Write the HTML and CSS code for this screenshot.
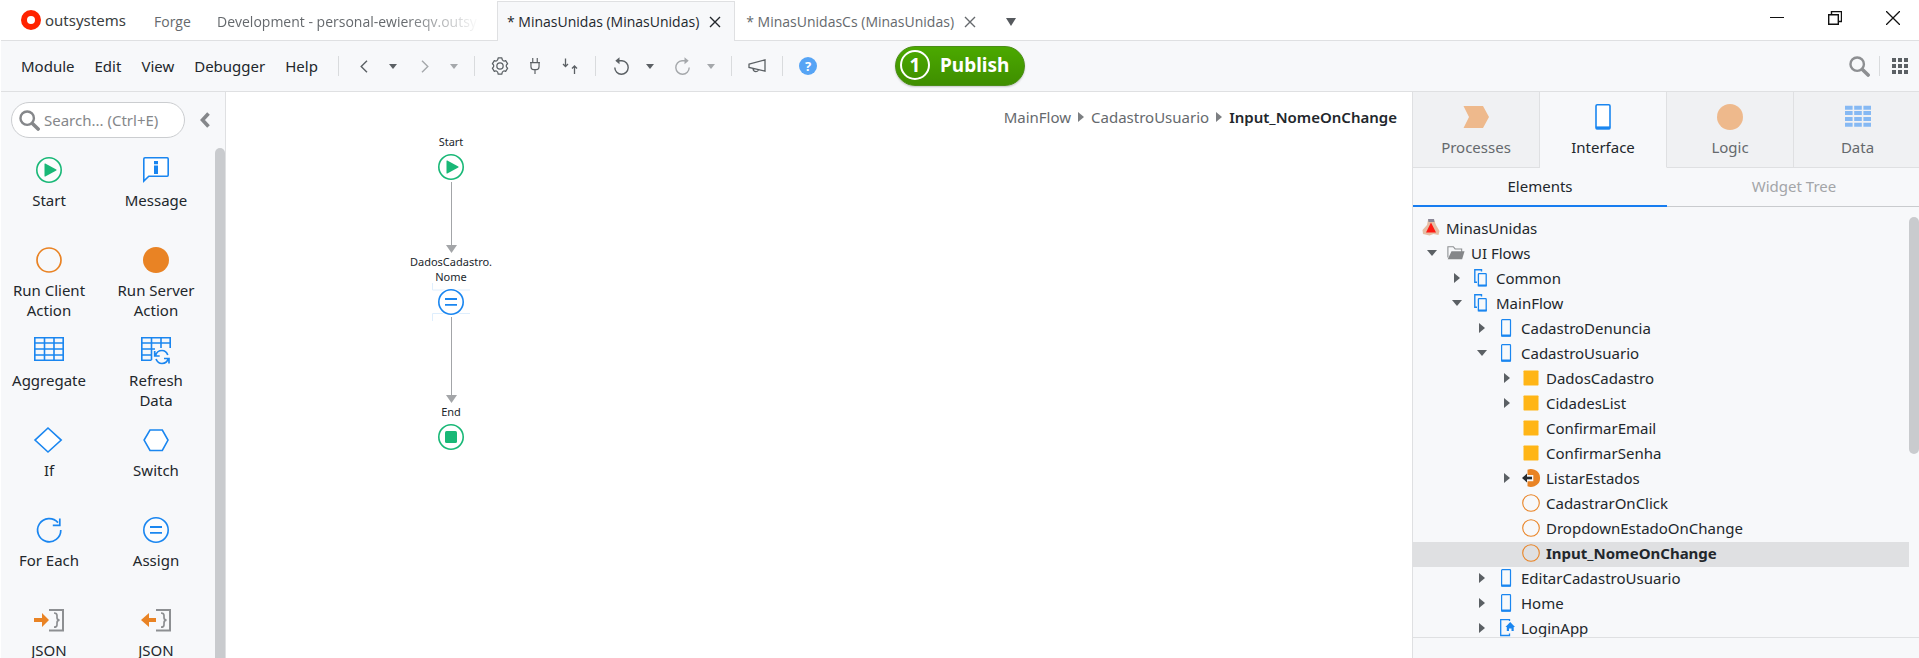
FILE: index.html
```html
<!DOCTYPE html>
<html lang="en">
<head>
<meta charset="utf-8">
<title>MinasUnidas</title>
<link rel="stylesheet" href="styles.css">
</head>
<body>
<svg class="defs" aria-hidden="true">
  <symbol id="down" viewBox="0 0 10 6"><path d="M0 0h10L5 6z" fill="currentColor"/></symbol>
  <symbol id="right" viewBox="0 0 6 10"><path d="M0 0v10l6-5z" fill="currentColor"/></symbol>
  <symbol id="x" viewBox="0 0 12 12"><path d="M1 1l10 10M11 1L1 11" stroke="currentColor" stroke-width="1.4" fill="none"/></symbol>
  <symbol id="search" viewBox="0 0 20 20"><circle cx="7.800" cy="7.800" r="6.400" fill="none" stroke="currentColor" stroke-width="2.300"/><path d="M13 13l5.200 5.200" stroke="currentColor" stroke-width="3.400" stroke-linecap="round"/></symbol>
  <symbol id="start" viewBox="0 0 26 26"><circle cx="13" cy="13" r="12.200" fill="#fff" fill-opacity=".6" stroke="#19b877" stroke-width="1.600"/><path d="M8.500 7v12q0 .8.800.4l11-5.800q.7-.5 0-1L9.300 6.600Q8.500 6.200 8.500 7z" fill="#19b877"/></symbol>
  <symbol id="assign" viewBox="0 0 26 26"><circle cx="13" cy="13" r="12.200" fill="#fff" fill-opacity=".6" stroke="#1a86f0" stroke-width="1.600"/><path d="M7 10h12M7 15.800h12" stroke="#1a86f0" stroke-width="1.800"/></symbol>
  <symbol id="end" viewBox="0 0 26 26"><circle cx="13" cy="13" r="12.200" fill="#fff" stroke="#19b877" stroke-width="1.600"/><rect x="7" y="7" width="12" height="12" rx="1.500" fill="#19b877"/></symbol>
  <symbol id="ring" viewBox="0 0 26 26"><circle cx="13" cy="13" r="12" fill="none" stroke="#e98324" stroke-width="1.700"/></symbol>
  <symbol id="flow" viewBox="0 0 18 18"><path d="M9.500 2.500V.8H2.800v12.400H5" fill="none" stroke="#1a86f0" stroke-width="1.400"/><rect x="6.400" y="4.600" width="7.800" height="12" rx=".6" fill="#f7f9fb" stroke="#1a86f0" stroke-width="1.300"/><path d="M5.800 16.500h9" stroke="#1a86f0" stroke-width="2"/></symbol>
  <symbol id="screen" viewBox="0 0 18 18"><rect x="4.600" y=".6" width="8.900" height="16.500" rx=".7" fill="#f7f9fb" stroke="#1a86f0" stroke-width="1.200"/><path d="M4.300 16.500h9.500" stroke="#1a86f0" stroke-width="2"/></symbol>
  <symbol id="var" viewBox="0 0 18 18"><rect x="1.500" y="1.500" width="15" height="15" rx=".7" fill="#ffb516"/></symbol>
  <symbol id="action" viewBox="0 0 18 18"><circle cx="9" cy="9" r="8.300" fill="none" stroke="#e98324" stroke-width="1.100"/></symbol>
</svg>

<header class="titlebar">
  <a class="brand" href="#"><svg width="20" height="20" viewBox="0 0 20 20"><circle cx="10" cy="10" r="7" fill="none" stroke="#ff2300" stroke-width="6"/></svg>outsystems</a>
  <nav class="tabs" aria-label="Open documents">
    <a class="tab forge" href="#">Forge</a>
    <a class="tab env" href="#">Development - personal-ewiereqv.outsy</a>
    <div class="tab active"><a href="#">* MinasUnidas (MinasUnidas)</a><button aria-label="Close MinasUnidas"><svg width="12" height="12"><use href="#x"/></svg></button></div>
    <div class="tab"><a href="#">* MinasUnidasCs (MinasUnidas)</a><button aria-label="Close MinasUnidasCs"><svg width="12" height="12"><use href="#x"/></svg></button></div>
    <button class="more" aria-label="More tabs"><svg width="10" height="8" viewBox="0 0 10 8"><path d="M0 0h10L5 8z" fill="currentColor"/></svg></button>
  </nav>
  <div class="window">
    <button aria-label="Minimize"><svg width="14" height="14" viewBox="0 0 14 14"><path d="M0 6.500h14" stroke="currentColor"/></svg></button>
    <button aria-label="Restore"><svg width="14" height="14" viewBox="0 0 14 14"><path d="M3.500 3.500v-3h10v10h-3M.7 3.700h9.600v9.600H.7z" fill="none" stroke="currentColor" stroke-width="1.400"/></svg></button>
    <button aria-label="Close"><svg width="14" height="14" viewBox="0 0 14 14"><path d="M0 0l14 14M14 0L0 14" stroke="currentColor" stroke-width="1.300"/></svg></button>
  </div>
</header>

<div class="toolbar">
  <nav class="menu"><button>Module</button><button>Edit</button><button>View</button><button>Debugger</button><button>Help</button></nav>
  <div class="tools">
    <span class="sep"></span>
    <button class="step" aria-label="Back"><svg width="8" height="13" viewBox="0 0 8 13"><path d="M7 .7L1.200 6.500 7 12.300" fill="none" stroke="currentColor" stroke-width="1.400"/></svg></button>
    <button class="drop" aria-label="Back history"><svg width="8" height="5"><use href="#down"/></svg></button>
    <button class="step off" aria-label="Forward"><svg width="8" height="13" viewBox="0 0 8 13"><path d="M1 .7l5.800 5.800L1 12.300" fill="none" stroke="currentColor" stroke-width="1.400"/></svg></button>
    <button class="drop off" aria-label="Forward history"><svg width="8" height="5"><use href="#down"/></svg></button>
    <span class="sep"></span>
    <button class="tool" aria-label="Settings"><svg width="18" height="18" viewBox="0 0 20 20" fill="none" stroke="currentColor" stroke-width="1.400" stroke-linejoin="round"><path d="M8 1h4q.3 2.600 1.500 3.200 1 .6 2.800-.1l2.200 3.500q-1.600 1.200-1.600 2.400t1.600 2.400l-2.200 3.500q-1.800-.7-2.800-.1Q12.300 16.400 12 19H8q-.3-2.600-1.500-3.200-1-.6-2.800.1l-2.200-3.500q1.600-1.200 1.600-2.400T1.500 7.600l2.200-3.500q1.800.7 2.800.1Q7.700 3.600 8 1z"/><circle cx="10" cy="10" r="3.500"/></svg></button>
    <button class="tool" aria-label="Dependencies"><svg width="18" height="20" viewBox="0 0 20 20" fill="none" stroke="currentColor" stroke-width="1.300"><path d="M7.500 1v5M12.500 1v5M4.500 6.200h11M5.500 6.500v4q0 3.500 3 3.500h3q3 0 3-3.500v-4M10 14v5"/></svg></button>
    <button class="tool" aria-label="Merge"><svg width="18" height="18" viewBox="0 0 18 18" fill="none" stroke="currentColor" stroke-width="1.300"><path d="M4.500 1.500v8M2 7l2.500 2.500L7 7M13.500 17V9M11 11.500L13.500 9l2.500 2.500"/></svg></button>
    <span class="sep"></span>
    <button class="hist" aria-label="Undo"><svg width="17" height="18" viewBox="0 0 17 18"><path d="M5 3.800h4A6.700 6.700 0 1 1 1.800 10.500" fill="none" stroke="currentColor" stroke-width="1.400"/><path d="M6.500.3v7L2.300 3.800z" fill="currentColor"/></svg></button>
    <button class="drop" aria-label="Undo history"><svg width="8" height="5"><use href="#down"/></svg></button>
    <button class="hist off" aria-label="Redo"><svg width="17" height="18" viewBox="0 0 17 18"><path d="M12 3.800H8A6.700 6.700 0 1 0 15.200 10.500" fill="none" stroke="currentColor" stroke-width="1.400"/><path d="M10.500.3v7l4.200-3.500z" fill="currentColor"/></svg></button>
    <button class="drop off" aria-label="Redo history"><svg width="8" height="5"><use href="#down"/></svg></button>
    <span class="sep"></span>
    <button class="single" aria-label="Feedback"><svg width="18" height="14" viewBox="0 0 18 14"><path d="M1 5.200L17 .9v11.200L1 8.500zM5 9.500q.3 3.200 3 3.200 2 0 2.500-2" fill="none" stroke="currentColor" stroke-width="1.300"/></svg></button>
    <span class="sep"></span>
    <button class="single help" aria-label="Help">?</button>
  </div>
  <button class="publish"><span class="count">1</span>Publish</button>
  <div class="right-tools">
    <button aria-label="Search"><svg width="21" height="21"><use href="#search"/></svg></button>
    <span class="sep"></span>
    <button aria-label="Apps"><svg width="16" height="16" viewBox="0 0 16 16" fill="#5b6064"><path d="M0 0h4v4H0zM6 0h4v4H6zM12 0h4v4h-4zM0 6h4v4H0zM6 6h4v4H6zM12 6h4v4h-4zM0 12h4v4H0zM6 12h4v4H6zM12 12h4v4h-4z"/></svg></button>
  </div>
</div>

<div class="workspace">
  <aside class="palette">
    <div class="palette-head">
      <label class="search"><svg width="21" height="21"><use href="#search"/></svg><input type="text" placeholder="Search... (Ctrl+E)" aria-label="Search"></label>
      <button class="collapse" aria-label="Collapse"><svg width="10" height="16" viewBox="0 0 10 16"><path d="M8.500 1.500L2.500 8l6 6.500" fill="none" stroke="currentColor" stroke-width="3.600"/></svg></button>
    </div>
    <div class="palette-body">
      <div class="items">
        <button><svg width="30" height="26"><use href="#start"/></svg><span>Start</span></button>
        <button><svg width="30" height="26" viewBox="0 0 30 26"><path d="M2.800 24V2q0-1.200 1.200-1.200h22.200q1 0 1 1.200v16q0 1.200-1 1.200H7.800z" fill="#fff" stroke="#1a86f0" stroke-width="1.600"/><path d="M13 4h4v3.200h-4zM13 8.500h4V17h-4z" fill="#1a86f0"/></svg><span>Message</span></button>
        <button><svg width="30" height="26"><use href="#ring"/></svg><span>Run Client Action</span></button>
        <button><svg width="30" height="26" viewBox="0 0 30 26"><circle cx="15" cy="13" r="13" fill="#e98324"/></svg><span>Run Server Action</span></button>
        <button><svg width="30" height="26" viewBox="0 0 30 26"><path d="M.8.800h28.400v22.400H.8zM.8 6h28.400M.8 12h28.400M.8 18h28.400M10.500 1v22M20 1v22" fill="none" stroke="#1a86f0" stroke-width="1.600"/></svg><span>Aggregate</span></button>
        <button><svg width="30" height="26" viewBox="0 0 30 26"><path d="M10.500 23.200H.8V.8h28.400V11M.8 6h28.400M.8 12H14M.8 18h9.700M10.500 1v22M20 1v10" fill="none" stroke="#1a86f0" stroke-width="1.600"/><path d="M14.500 18.500q1.500-5 6.500-5 4 0 5.800 4.500M27.300 21.500q-1.500 5-6.300 5-4.200 0-6-4.500M13.700 14v5h5M28 26.500v-5h-5" fill="none" stroke="#1a86f0" stroke-width="1.700"/></svg><span>Refresh Data</span></button>
        <button><svg width="30" height="26" viewBox="0 0 30 26"><path d="M14 1l13.200 12.100L14 25 1 13.100z" fill="#fff" stroke="#1a86f0" stroke-width="1.600"/></svg><span>If</span></button>
        <button><svg width="30" height="26" viewBox="0 0 30 26"><path d="M9 3h12.300L27 13.100l-5.700 10.400H9L3.100 13.100z" fill="#fff" stroke="#1a86f0" stroke-width="1.600"/></svg><span>Switch</span></button>
        <button><svg width="30" height="26" viewBox="0 0 30 26"><path d="M26.800 13A11.600 11.600 0 1 1 24 5.600M25.800 1.600v6.700h-7" fill="none" stroke="#1a86f0" stroke-width="1.700"/></svg><span>For Each</span></button>
        <button><svg width="30" height="26"><use href="#assign"/></svg><span>Assign</span></button>
        <button><svg width="30" height="26" viewBox="0 0 30 26"><path d="M0 11h8V6l7 7-7 7v-5H0z" fill="#e98324"/><path d="M15 3h14v20.500H15" fill="none" stroke="#8d8f92" stroke-width="2"/><path d="M20 6q3 0 3 2.500v2q0 2.500 2.500 2.700-2.500.2-2.500 2.700v1.800q0 2.500-3 2.500" fill="none" stroke="#8d8f92" stroke-width="1.700"/></svg><span>JSON</span></button>
        <button><svg width="30" height="26" viewBox="0 0 30 26"><path d="M15 11H8V6l-8 7 8 7v-5h7z" fill="#e98324"/><path d="M15 3h14v20.500H15" fill="none" stroke="#8d8f92" stroke-width="2"/><path d="M20 6q3 0 3 2.500v2q0 2.500 2.500 2.700-2.500.2-2.500 2.700v1.800q0 2.500-3 2.500" fill="none" stroke="#8d8f92" stroke-width="1.700"/></svg><span>JSON</span></button>
      </div>
      <div class="thumb"></div>
    </div>
  </aside>

  <main class="canvas">
    <nav class="crumbs" aria-label="Breadcrumb"><a href="#">MainFlow</a><svg width="6" height="10"><use href="#right"/></svg><a href="#">CadastroUsuario</a><svg width="6" height="10"><use href="#right"/></svg><strong>Input_NomeOnChange</strong></nav>
    <div class="flow">
      <div class="node"><span>Start</span><svg width="26" height="26"><use href="#start"/></svg></div>
      <svg width="12" height="72" viewBox="0 0 12 72"><path d="M6.500 0v64" stroke="#a3a5a8"/><path d="M1 63h11l-5.500 8z" fill="#a3a5a8"/></svg>
      <div class="node"><span>DadosCadastro.<br>Nome</span><svg width="38" height="38" viewBox="-6 -6 38 38" class="picked"><path d="M-5.500-6v7h38M-5.500 32v-7.500h38" fill="none" stroke="#deeefd"/><circle cx="13" cy="13" r="14" fill="#fff"/><use href="#assign" width="26" height="26"/></svg></div>
      <svg width="12" height="87" viewBox="0 0 12 87"><path d="M6.500 0v79" stroke="#a3a5a8"/><path d="M1 78h11l-5.500 8z" fill="#a3a5a8"/></svg>
      <div class="node"><span>End</span><svg width="26" height="26"><use href="#end"/></svg></div>
    </div>
  </main>

  <aside class="inspector">
    <nav class="layers">
      <button><svg width="26" height="26" viewBox="0 0 26 26"><path d="M.5 2H20l6 11-6 11H.5L6 13z" fill="#eeb98c"/></svg>Processes</button>
      <button class="active"><svg width="26" height="26" viewBox="0 0 26 26"><rect x="6" y=".8" width="14" height="24" rx="1.200" fill="#fff" stroke="#1a86f0" stroke-width="1.600"/><path d="M5.800 23.900h14.400" stroke="#1a86f0" stroke-width="3"/></svg>Interface</button>
      <button><svg width="26" height="26" viewBox="0 0 26 26"><circle cx="13" cy="13" r="13" fill="#eeb98c"/></svg>Logic</button>
      <button><svg width="26" height="26" viewBox="0 0 26 26"><path d="M0 3.800h7.600M9.200 3.800h7.600M18.400 3.800H26M0 9h7.600M9.200 9h7.600M18.400 9H26M0 15h7.600M9.200 15h7.600M18.400 15H26M0 20.700h7.600M9.200 20.700h7.600M18.400 20.700H26" fill="none" stroke="#86b9f3" stroke-width="4"/></svg>Data</button>
    </nav>
    <nav class="views"><button class="active">Elements</button><button>Widget Tree</button></nav>
    <div class="tree-wrap">
      <ul class="tree">
        <li class="l0"><svg width="18" height="18" viewBox="0 0 18 18"><path d="M6 1h6l2 5 3.500 6-1 4-5-1-4 1.500L1 15 .5 11 5 6z" fill="#e5bda4"/><path d="M6 0h6l.5 3h-6z" fill="#8b8797"/><path d="M9 3.500l5 10H4z" fill="#ff1a13"/></svg><a href="#">MinasUnidas</a></li>
        <li class="l1"><i class="open"></i><svg width="20" height="18" viewBox="0 0 20 18"><path d="M1 14V2h6l2 2.500h7.300V8" fill="none" stroke="#8d8f92" stroke-width="1.200"/><path d="M5 7h14.500l-2.700 9H.8z" fill="#858789"/></svg><a href="#">UI Flows</a></li>
        <li class="l2"><i></i><svg width="18" height="18"><use href="#flow"/></svg><a href="#">Common</a></li>
        <li class="l2"><i class="open"></i><svg width="18" height="18"><use href="#flow"/></svg><a href="#">MainFlow</a></li>
        <li class="l3"><i></i><svg width="18" height="18"><use href="#screen"/></svg><a href="#">CadastroDenuncia</a></li>
        <li class="l3"><i class="open"></i><svg width="18" height="18"><use href="#screen"/></svg><a href="#">CadastroUsuario</a></li>
        <li class="l4"><i></i><svg width="18" height="18"><use href="#var"/></svg><a href="#">DadosCadastro</a></li>
        <li class="l4"><i></i><svg width="18" height="18"><use href="#var"/></svg><a href="#">CidadesList</a></li>
        <li class="l4"><i class="leaf"></i><svg width="18" height="18"><use href="#var"/></svg><a href="#">ConfirmarEmail</a></li>
        <li class="l4"><i class="leaf"></i><svg width="18" height="18"><use href="#var"/></svg><a href="#">ConfirmarSenha</a></li>
        <li class="l4"><i></i><svg width="18" height="18" viewBox="0 0 18 18"><path d="M5.500.7Q9-.5 12.500.8a8.800 8.800 0 0 1 0 16.400Q9 18.500 5.500 17.300v-5.100h5.800V6H5.500z" fill="#e98324"/><path d="M10 9H4" stroke="#262b30" stroke-width="2.600"/><path d="M5 4.500v9L0 9z" fill="#262b30"/></svg><a href="#">ListarEstados</a></li>
        <li class="l4"><i class="leaf"></i><svg width="18" height="18"><use href="#action"/></svg><a href="#">CadastrarOnClick</a></li>
        <li class="l4"><i class="leaf"></i><svg width="18" height="18"><use href="#action"/></svg><a href="#">DropdownEstadoOnChange</a></li>
        <li class="l4 selected"><i class="leaf"></i><svg width="18" height="18"><use href="#action"/></svg><a href="#">Input_NomeOnChange</a></li>
        <li class="l3"><i></i><svg width="18" height="18"><use href="#screen"/></svg><a href="#">EditarCadastroUsuario</a></li>
        <li class="l3"><i></i><svg width="18" height="18"><use href="#screen"/></svg><a href="#">Home</a></li>
        <li class="l3"><i></i><svg width="18" height="18" viewBox="0 0 18 18"><path d="M12.500 2V.7H3.700v15.800h8.800v-2" fill="none" stroke="#1a86f0" stroke-width="1.300"/><path d="M13.200 3L18 8h-1.300v4h-2.200V9.500H12V12H9.800V8H8.500z" fill="#1a86f0"/></svg><a href="#">LoginApp</a></li>
      </ul>
      <div class="thumb"></div>
    </div>
    <footer class="details"></footer>
  </aside>
</div>
</body>
</html>
```
FILE: styles.css
```css
* { box-sizing: border-box; }
body {
  margin: 0;
  padding-left: 1px;
  height: 100vh;
  display: flex;
  flex-direction: column;
  overflow: hidden;
  background: #fff;
  color: #22272c;
  font: 15px/20px "Noto Sans", "Open Sans", sans-serif;
}
button {
  margin: 0;
  padding: 0;
  border: 0;
  background: none;
  color: inherit;
  font: inherit;
  display: flex;
  align-items: center;
  justify-content: center;
}
a { color: inherit; text-decoration: none; }
svg { display: block; flex: none; }
.defs { position: absolute; width: 0; height: 0; }
.sep { width: 1px; height: 20px; background: #d9dbdd; }

/* Title bar */
.titlebar { display: flex; height: 41px; flex: none; border-bottom: 1px solid #dfe0e2; }
.brand { display: flex; align-items: center; gap: 4px; width: 138px; padding-left: 20px; color: #3a3d40; }
.tabs { display: flex; flex: 1; color: #65696d; font-family: "Open Sans", "Noto Sans", sans-serif; font-size: 14px; }
.tab { display: flex; align-items: center; gap: 9px; padding: 3px 10px 0 9px; white-space: nowrap; }
.tab button { width: 14px; height: 20px; }
.tab.forge { width: 63px; padding-left: 15px; }
.tab.env {
  display: block;
  width: 295px;
  padding: 12px 0 0 15px;
  overflow: hidden;
  -webkit-mask-image: linear-gradient(90deg, #000 68%, transparent 94%);
  mask-image: linear-gradient(90deg, #000 68%, transparent 94%);
}
.tab.active { margin: 1px 0 -1px; padding: 1px 12px 0 9px; border: 1px solid #dfe0e2; border-bottom: 0; background: #f7f8fa; color: #22272c; }
.tab.active + .tab { padding-left: 11px; }
.more { width: 48px; padding-top: 3px; color: #55595d; }
.window { display: flex; gap: 6px; }
.window button { width: 52px; height: 36px; color: #111; }

/* Menu and tool bar */
.toolbar { display: flex; align-items: center; position: relative; height: 51px; flex: none; background: #f7f8fa; border-bottom: 1px solid #dfe0e2; }
.menu { display: flex; gap: 20px; padding-left: 20px; width: 337px; }
.tools { display: flex; align-items: center; color: #5b6064; }
.step, .hist, .single { width: 50px; }
.drop { width: 8px; }
.step.off, .hist.off { margin-left: 3px; }
.off { color: #a5a8ab; }
.drop.off { margin-right: 16px; }
.tool { width: 35px; }
.tool:nth-of-type(5) { margin-left: 7px; }
.tool + .sep { margin-left: 8px; }
.help { width: 18px; height: 18px; margin-left: 16px; border-radius: 50%; background: #56a4f5; color: #fff; font: bold 13px/18px "Noto Sans", sans-serif; }
.publish {
  position: absolute;
  left: calc(50% - 65px);
  top: 5px;
  height: 40px;
  padding: 0 15px 2px 4px;
  gap: 10px;
  border-radius: 20px;
  border: 1px solid #4b8d18;
  background: linear-gradient(#4ba900, #3f8e00);
  box-shadow: 0 1px 2px #0003;
  color: #fff;
  font-weight: bold;
  font-size: 19px;
}
.count { width: 30px; height: 30px; border: 2px solid #fff; border-radius: 50%; line-height: 26px; }
.right-tools { margin-left: auto; display: flex; align-items: center; gap: 9px; padding-right: 11px; color: #8d8f92; }
.right-tools button:last-child { margin-left: 3px; }

.workspace { display: flex; flex: 1; min-height: 0; }

/* Palette */
.palette { width: 225px; flex: none; display: flex; flex-direction: column; background: #f7f8fa; border-right: 1px solid #dfe0e2; }
.palette-head { display: flex; align-items: center; gap: 15px; padding: 10px; }
.search { display: flex; align-items: center; gap: 4px; width: 174px; height: 36px; padding-left: 7px; border: 1px solid #cbcdd0; border-radius: 18px; background: #fff; color: #85878a; }
.search input { width: 100%; min-width: 0; padding: 0; border: 0; outline: 0; background: none; font: inherit; color: #22272c; }
.search input::placeholder { color: #85878a; opacity: 1; }
.collapse { color: #85878a; }
.palette-body { display: flex; flex: 1; min-height: 0; justify-content: space-between; overflow: hidden; }
.items { display: grid; grid-template-columns: 96px 96px; grid-auto-rows: 90px; column-gap: 11px; padding-top: 9px; }
.items button { flex-direction: column; justify-content: flex-start; gap: 7px; }
.items span { max-width: 84px; }
.items svg { overflow: visible; }
.thumb { width: 10px; flex: none; border-radius: 5px; background: #c9cbce; }
.palette-body .thumb { border-radius: 5px 5px 0 0; }

/* Flow canvas */
.canvas { flex: 1; min-width: 0; }
.crumbs { display: flex; justify-content: flex-end; align-items: center; gap: 7px; padding: 15px 15px 0 0; color: #65696d; }
.crumbs svg { color: #7c7f82; }
.crumbs strong { color: #22272c; font-weight: 600; }
.flow { width: 450px; display: flex; flex-direction: column; align-items: center; padding-top: 7px; }
.node { display: flex; flex-direction: column; align-items: center; gap: 5px; padding-bottom: 2px; font-size: 11px; line-height: 15px; text-align: center; }
.picked { margin: -6px; }

/* Inspector */
.inspector { width: 507px; flex: none; display: flex; flex-direction: column; overflow: hidden; background: #f7f8fa; border-left: 1px solid #dfe0e2; }
.layers, .views { display: grid; margin-right: -2px; }
.layers { grid-template-columns: repeat(4, 1fr); }
.layers button { flex-direction: column; gap: 7px; height: 76px; padding-top: 1px; background: #f0f1f3; border-right: 1px solid #dfe0e2; border-bottom: 1px solid #dfe0e2; color: #65696d; }
.layers button:last-child { border-right: 0; }
.layers .active { background: #f7f8fa; border-bottom-color: #f7f8fa; color: #22272c; }
.views { grid-template-columns: 1fr 1fr; }
.views button { height: 39px; padding-bottom: 2px; color: #a3a5a8; border-bottom: 1px solid #c9cbce; }
.views .active { padding-bottom: 1px; color: #22272c; border-bottom: 2px solid #177df0; }
.tree-wrap { display: flex; flex: 1; min-height: 0; padding-top: 10px; overflow: hidden; }
.tree { flex: 1; margin: 0; padding: 0; list-style: none; }
.tree li { display: flex; align-items: center; height: 25px; gap: 6px; padding-bottom: 3px; }
.tree li svg { width: 18px; overflow: visible; }
.tree i { width: 19px; display: flex; justify-content: center; }
.tree i::before { content: ""; border: 5px solid transparent; border-left: 6px solid #5b6064; border-right: 0; }
.tree i.open::before { border: 5px solid transparent; border-top: 6px solid #5b6064; border-bottom: 0; }
.tree i.leaf::before { display: none; }
.l0, .l1 { padding-left: 9px; }
.l2 { padding-left: 34px; }
.l3 { padding-left: 59px; }
.l4 { padding-left: 84px; }
.tree .selected { background: #dfe0e2; font-weight: bold; }
.tree-wrap .thumb { height: 237px; }
.details { height: 21px; border-top: 1px solid #dfe0e2; }
```
